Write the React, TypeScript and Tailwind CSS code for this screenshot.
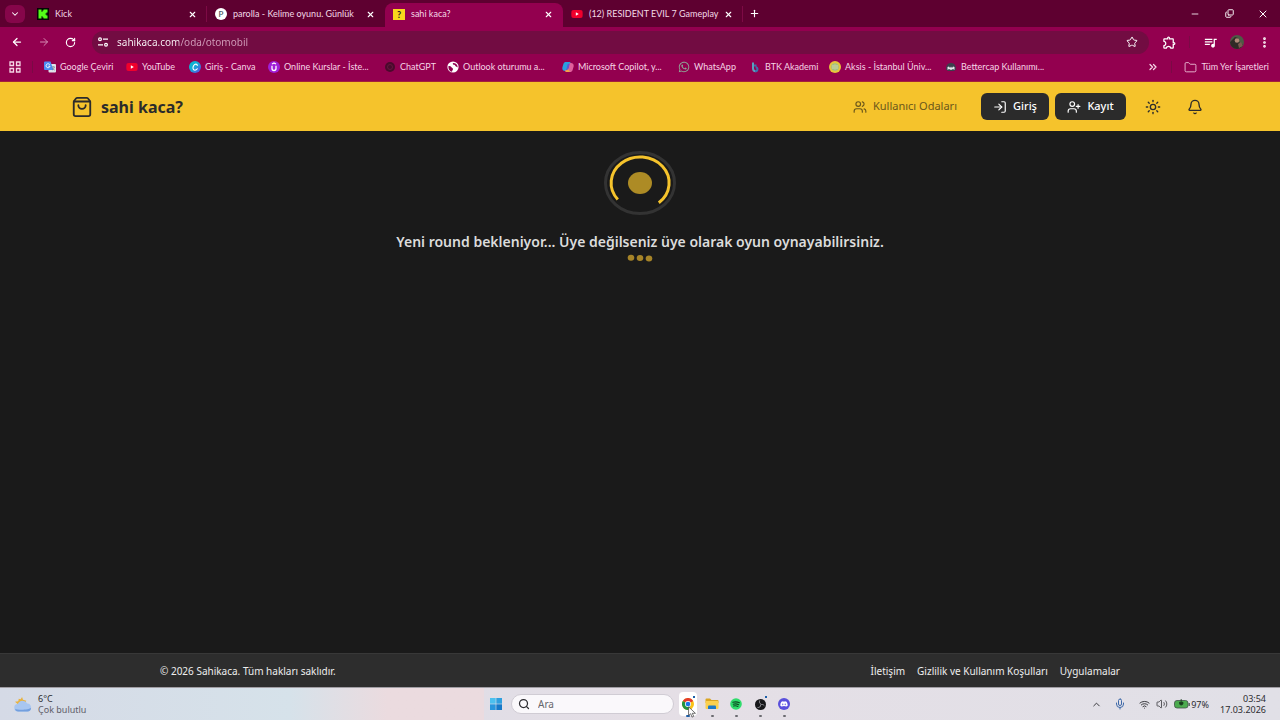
import * as React from "react";
import {
  ArrowLeft,
  ArrowRight,
  Bell,
  ChevronDown,
  ChevronUp,
  ChevronsRight,
  Copy,
  EllipsisVertical,
  Folder,
  LogIn,
  Mic,
  Minus,
  Plus,
  RotateCw,
  Search,
  ShoppingBag,
  Star,
  Sun,
  UserPlus,
  Users,
  Volume2,
  Wifi,
  X,
} from "lucide-react";
import { FaDiscord, FaWhatsapp, FaYoutube } from "react-icons/fa";
import { MdOutlineExtension, MdOutlineQueueMusic } from "react-icons/md";

/* ---------- small brand icons ---------- */

function KickIcon() {
  return (
    <svg viewBox="0 0 12 12" className="h-3 w-3 shrink-0">
      <rect width="12" height="12" fill="#050505" />
      <path d="M1.500 1.500h3v2.200h1V2.600h1V1.500h4v3H9.400v1H8.400v1h1v1h1.100v3h-4V9.400h-1V8.300h-1v2.200h-3z" fill="#53fc18" />
    </svg>
  );
}

function ParollaIcon() {
  return (
    <span className="flex h-3 w-3 shrink-0 items-center justify-center rounded-full bg-white text-[8px] leading-none font-semibold text-[#4b5563]">
      P
    </span>
  );
}

function QuestionIcon() {
  return (
    <span className="flex h-[11px] w-3 shrink-0 items-center justify-center bg-[#f9d71c] text-[9px] leading-none font-bold text-[#222222]">
      ?
    </span>
  );
}

function YoutubeIcon() {
  return (
    <span className="relative flex h-3 w-3 shrink-0 items-center justify-center">
      <span className="absolute h-1 w-1 bg-white" />
      <FaYoutube className="relative h-3 w-3 text-[#f0002c]" />
    </span>
  );
}

function TranslateIcon() {
  return (
    <svg viewBox="0 0 12 12" className="h-3 w-3 shrink-0">
      <rect x="4.500" y="3" width="7.500" height="8.500" rx="1" fill="#dfe3ea" />
      <path d="M1 .5h5.500L9.500 9H1a1 1 0 0 1-1-1V1.500a1 1 0 0 1 1-1z" fill="#4c8bf5" />
      <path d="M5.800 3.800A2 2 0 1 0 6 5.200H4.300" fill="none" stroke="#fff" strokeWidth=".9" />
      <path d="M7.500 6h3.500M9.200 5v1M10.300 6c-.3 1.500-1 2.300-2 3M8.600 7.200c.5.900 1.200 1.600 2.200 2" fill="none" stroke="#68758a" strokeWidth=".6" />
    </svg>
  );
}

function CanvaIcon() {
  return (
    <svg viewBox="0 0 12 12" className="h-3 w-3 shrink-0">
      <defs>
        <linearGradient id="canva" x1="0" y1="0" x2="1" y2="1">
          <stop offset="0" stopColor="#00c4cc" />
          <stop offset=".5" stopColor="#19a5d8" />
          <stop offset="1" stopColor="#6a3be4" />
        </linearGradient>
      </defs>
      <circle cx="6" cy="6" r="6" fill="url(#canva)" />
      <path d="M8.300 4.400C8.200 2.700 5.900 2.600 4.700 4.500 3.300 6.700 4 9.200 5.900 9.200c1 0 1.800-.5 2.400-1.400" fill="none" stroke="#fff" strokeWidth="1.100" strokeLinecap="round" />
    </svg>
  );
}

function CoursesIcon() {
  return (
    <svg viewBox="0 0 12 12" className="h-3 w-3 shrink-0">
      <circle cx="6" cy="6" r="6" fill="#a01fd8" />
      <path d="M4 4.700v2.800a2 2 0 0 0 4 0V4.700M4 3l2-1 2 1" fill="none" stroke="#fff" strokeWidth="1.300" />
    </svg>
  );
}

function ChatIcon() {
  return (
    <svg viewBox="0 0 12 12" className="h-3 w-3 shrink-0">
      <circle cx="6" cy="6" r="5" fill="#4a0a2c" />
      <circle cx="6" cy="6" r="2.500" fill="none" stroke="#6d1a45" strokeWidth=".8" />
    </svg>
  );
}

function GlobeIcon() {
  return (
    <svg viewBox="0 0 12 12" className="h-3 w-3 shrink-0">
      <circle cx="6" cy="6" r="5.600" fill="#fff" />
      <path d="M1.500 5c1.500 0 2.500.3 3 1.200.4.900 1.500.8 1.500 1.800S5 9.500 5 10.800C2.800 10.500 1 8 1.500 5zM6 2c-.6 1 .2 1.800 1.300 1.800.9 0 .7 1.500 1.700 1.700.9.200 1 .8 1.700.8C10.800 4 9 2 6 2z" fill="#8f0050" />
    </svg>
  );
}

function CopilotIcon() {
  return (
    <svg viewBox="0 0 12 12" className="h-3 w-3 shrink-0">
      <path d="M4 1h3.300c1 0 1.400.6 1.700 1.500L6.500 3 5 8.500C4.700 9.600 4 10 3 10 1 10-.2 8.500.5 6l.9-3C1.900 1.500 2.700 1 4 1z" fill="#2a9fe0" />
      <path d="M8 11H4.700c-1 0-1.400-.6-1.700-1.500L5.500 9 7 3.500C7.300 2.400 8 2 9 2c2 0 3.200 1.500 2.500 4l-.9 3C10.100 10.500 9.300 11 8 11z" fill="#e0609c" />
      <path d="M5.700 3h2l-1.500 6h-2z" fill="#5b59d6" />
      <path d="M3 9.500 5.500 9 6 7.500 8 11H4.700c-1 0-1.400-.6-1.700-1.500z" fill="#f2a444" />
    </svg>
  );
}

function BtkIcon() {
  return (
    <svg viewBox="0 0 12 12" className="h-3 w-3 shrink-0" fill="none" strokeWidth="2">
      <path d="M4 1.500v5.800c0 2 1 3 2.600 3" stroke="#5aa0bd" />
      <path d="M5 4.500h2.500M6 10.300c3 0 3.300-4 .6-4" stroke="#3f6fae" />
    </svg>
  );
}

function AksisIcon() {
  return (
    <svg viewBox="0 0 12 12" className="h-3 w-3 shrink-0">
      <circle cx="6" cy="6" r="6" fill="#e6c63c" />
      <circle cx="6" cy="6" r="3.800" fill="#9fbf86" />
      <path d="M4 4v4M6 3.500v5M8 4v4" stroke="#e9e2a8" strokeWidth=".8" />
    </svg>
  );
}

function BettercapIcon() {
  return (
    <svg viewBox="0 0 12 12" className="h-3 w-3 shrink-0">
      <path d="M1 8.500C1 4 3 2 6 2s5 2 5 6.500L9 10H3z" fill="#3b3f4c" />
      <path d="M2.500 9V6l1.500-.5L5 7l1-1.500L7 7l1-1.500 1.500.5v3L8 8 6 9 4 8z" fill="#e6e6ea" />
    </svg>
  );
}

function ChromeIcon() {
  return (
    <svg viewBox="0 0 24 24" className="h-3 w-3">
      <circle cx="12" cy="12" r="12" fill="#fbc116" />
      <path d="M12 12 1.600 6A12 12 0 0 1 22.400 6z" fill="#e33b2e" />
      <path d="M1.600 6A12 12 0 0 0 12 24l5.200-9L12 12z" fill="#229342" />
      <circle cx="12" cy="12" r="6" fill="#fff" />
      <circle cx="12" cy="12" r="4.700" fill="#1a73e8" />
    </svg>
  );
}

function ExplorerIcon() {
  return (
    <svg viewBox="0 0 14 12" className="h-3 w-[14px]">
      <path d="M.5 1.500a1 1 0 0 1 1-1H5L6.500 2H12.500a1 1 0 0 1 1 1v2H.5z" fill="#dba520" />
      <rect x=".5" y="3" width="13" height="8" rx="1" fill="#fbd04f" />
      <path d="M3 11V8.500a1 1 0 0 1 1-1h6a1 1 0 0 1 1 1V11z" fill="#1d79c9" />
    </svg>
  );
}

function SpotifyIcon() {
  return (
    <svg viewBox="0 0 12 12" className="h-3 w-3">
      <circle cx="6" cy="6" r="5.800" fill="#2fdc6c" />
      <path d="M2.800 4.300c2.300-.7 4.600-.5 6.600.5M3.200 6.200c2-.5 3.900-.3 5.500.5M3.600 8c1.600-.4 3-.2 4.300.4" fill="none" stroke="#0d4a22" strokeWidth="1.100" strokeLinecap="round" />
    </svg>
  );
}

function ObsIcon() {
  return (
    <svg viewBox="0 0 12 12" className="h-[11px] w-[11px]">
      <circle cx="6" cy="6" r="6" fill="#17171a" />
      <path d="M5 2c-.6 1.600.1 2.900 1.300 3.600M9.900 7c-1-1.300-2.500-1.400-3.600-.7M3.200 9.300c1.700.2 2.800-.8 2.900-2.200" fill="none" stroke="#a5a5ab" strokeWidth=".9" strokeLinecap="round" />
    </svg>
  );
}

function WindowsIcon() {
  return (
    <svg viewBox="0 0 12 12" className="h-3 w-3">
      <path d="M0 0h5.700v5.700H0z" fill="#4cc0ee" />
      <path d="M6.300 0H12v5.700H6.300z" fill="#2f9fde" />
      <path d="M0 6.300h5.700V12H0z" fill="#2896dc" />
      <path d="M6.300 6.300H12V12H6.300z" fill="#1679c8" />
    </svg>
  );
}

function WeatherIcon() {
  return (
    <svg viewBox="0 0 20 18" className="h-[17px] w-5 shrink-0">
      <path d="M9 1l1 3 3.500 1-1.500 3-7 1-3.500-3L5 5.500 5.500 3l2 .5z" fill="#e9b23e" />
      <path d="M5 16.500a4 4 0 0 1-.5-8A5.500 5.500 0 0 1 14.500 8a4.300 4.300 0 0 1 .5 8.500z" fill="#a8c6f0" />
      <path d="M1.600 13.500C4 15 16 15 18.600 12.500c0 2.500-1.600 4-3.600 4H5c-2 0-3.200-1.500-3.400-3z" fill="#739fde" />
    </svg>
  );
}

function AppsIcon() {
  return (
    <svg viewBox="0 0 12 12" className="h-3 w-3" fill="none" stroke="currentColor" strokeWidth="1.300">
      <path d="M1 1h3.500v3.500H1zM7.500 1H11v3.500H7.500zM1 7.500h3.500V11H1zM7.500 7.500H11V11H7.500z" />
    </svg>
  );
}

function TuneIcon() {
  return (
    <svg viewBox="0 0 12 12" className="h-3 w-3 shrink-0" fill="none" stroke="currentColor" strokeWidth="1.200">
      <circle cx="3" cy="3.200" r="1.400" />
      <path d="M6 3.200h5M1 8.800h5" />
      <circle cx="9" cy="8.800" r="1.400" />
    </svg>
  );
}

function BatteryIcon() {
  return (
    <svg viewBox="0 0 16 10" className="h-[10px] w-4">
      <rect x=".5" y="1.500" width="13.500" height="7.500" rx="2.500" fill="#4cab4f" stroke="#41524a" strokeWidth=".8" />
      <path d="M15.200 4v3" stroke="#41524a" strokeWidth="1.200" />
      <path d="M7.200 0v3M5.500 3.300h3.500v1a1.700 1.700 0 0 1-3.500 0z" fill="#173b1c" stroke="#173b1c" strokeWidth=".8" />
    </svg>
  );
}

/* ---------- browser ---------- */

interface TabProps {
  icon: React.ReactNode;
  title: string;
  active?: boolean;
  divider?: boolean;
}

function BrowserTab({ icon, title, active = false, divider = false }: TabProps) {
  return (
    <div className={`flex w-[178px] items-center pb-[2px] ${active ? "rounded-t-lg bg-[#93004f]" : ""}`}>
      <div
        className={`flex h-4 flex-1 items-center gap-[6px] border-r pr-[9px] pl-2 ${
          divider ? "border-[#7d0a45]" : "border-transparent"
        }`}
      >
        {icon}
        <span className="min-w-0 flex-1 text-[9px] whitespace-nowrap text-[#f3d9e6]">{title}</span>
        <button type="button" aria-label={`${title} sekmesini kapat`} className="flex shrink-0 items-center justify-center">
          <X className="h-[9px] w-[9px]" strokeWidth={3} />
        </button>
      </div>
    </div>
  );
}

const bookmarks = [
  { label: "Google Çeviri", icon: <TranslateIcon />, width: "w-[82px]" },
  { label: "YouTube", icon: <YoutubeIcon />, width: "w-[63px]" },
  { label: "Giriş - Canva", icon: <CanvaIcon />, width: "w-[79px]" },
  { label: "Online Kurslar - İste...", icon: <CoursesIcon />, width: "w-[116px]" },
  { label: "ChatGPT", icon: <ChatIcon />, width: "w-[63px]" },
  { label: "Outlook oturumu a...", icon: <GlobeIcon />, width: "w-[115px]" },
  { label: "Microsoft Copilot, y...", icon: <CopilotIcon />, width: "w-[116px]" },
  { label: "WhatsApp", icon: <FaWhatsapp className="h-3 w-3 shrink-0 text-[#8fa596]" />, width: "w-[71px]" },
  { label: "BTK Akademi", icon: <BtkIcon />, width: "w-[80px]" },
  { label: "Aksis - İstanbul Üniv...", icon: <AksisIcon />, width: "w-[116px]" },
  { label: "Bettercap Kullanımı...", icon: <BettercapIcon />, width: "w-[116px]" },
];

function BrowserChrome() {
  return (
    <div className="border-b border-[#a3203c] bg-[#93004f] font-[Lato,sans-serif] text-white">
      {/* Tabs */}
      <div className="flex h-[27px] items-stretch bg-[#5e0030]">
        <button
          type="button"
          aria-label="Sekmelerde ara"
          className="mr-1 ml-[5px] flex h-[18px] w-5 items-center justify-center self-center rounded-md bg-[#86064a]"
        >
          <ChevronDown className="h-[10px] w-[10px]" strokeWidth={2.500} />
        </button>
        <div className="flex items-stretch pt-[3px]">
          <BrowserTab icon={<KickIcon />} title="Kick" divider />
          <BrowserTab icon={<ParollaIcon />} title="parolla - Kelime oyunu. Günlük" />
          <BrowserTab icon={<QuestionIcon />} title="sahi kaca?" active />
          <BrowserTab icon={<YoutubeIcon />} title="(12) RESIDENT EVIL 7 Gameplay" divider />
        </div>
        <button type="button" aria-label="Yeni sekme" className="ml-[3px] flex w-5 items-center justify-center">
          <Plus className="h-[11px] w-[11px]" strokeWidth={2.500} />
        </button>
        <div className="ml-auto flex">
          <button type="button" aria-label="Simge durumuna küçült" className="flex w-[34px] items-center justify-center">
            <Minus className="h-[10px] w-[10px]" />
          </button>
          <button type="button" aria-label="Önceki boyut" className="flex w-[34px] items-center justify-center">
            <Copy className="h-[9px] w-[9px] -scale-y-100" strokeWidth={2.500} />
          </button>
          <button type="button" aria-label="Kapat" className="flex w-[34px] items-center justify-center">
            <X className="h-3 w-3" />
          </button>
        </div>
      </div>

      {/* Address bar */}
      <div className="flex h-[30px] items-center">
        <div className="flex items-center pl-[3px]">
          <button type="button" aria-label="Geri" className="flex w-[27px] justify-center">
            <ArrowLeft className="h-3 w-3" strokeWidth={2.500} />
          </button>
          <button type="button" aria-label="İleri" className="flex w-[27px] justify-center text-[#d58bb3]">
            <ArrowRight className="h-3 w-3" />
          </button>
          <button type="button" aria-label="Yenile" className="flex w-[27px] justify-center">
            <RotateCw className="h-[11px] w-[11px]" strokeWidth={2.500} />
          </button>
        </div>
        <div className="ml-2 flex h-[23px] min-w-0 flex-1 items-center gap-2 rounded-full bg-[#720c42] pr-[11px] pl-[5px]">
          <TuneIcon />
          <input
            type="text"
            aria-label="Adres çubuğu"
            defaultValue="sahikaca.com/oda/otomobil"
            className="min-w-0 flex-1 bg-linear-to-r from-white from-[62px] to-[#d3a0bc] to-[62px] bg-clip-text font-['Noto_Sans',sans-serif] text-[10px] text-transparent outline-none"
          />
          <button type="button" aria-label="Yer işareti ekle">
            <Star className="h-3 w-3" />
          </button>
        </div>
        <div className="flex items-center">
          <button type="button" aria-label="Uzantılar" className="flex w-10 justify-center">
            <MdOutlineExtension className="h-[15px] w-[15px]" />
          </button>
          <span className="h-3 w-px bg-[#7a0a45]" />
          <button type="button" aria-label="Medya" className="flex w-10 justify-center">
            <MdOutlineQueueMusic className="h-[15px] w-[15px]" />
          </button>
          <button
            type="button"
            aria-label="Profil"
            className="mr-3 flex h-[14px] w-[14px] items-center justify-center overflow-hidden rounded-full bg-[#4d5a45]"
          >
            <svg viewBox="0 0 14 14" className="h-full w-full">
              <path d="M0 14V7l5-5 3 1 1 4 4 3v4z" fill="#2f2a26" />
              <circle cx="7" cy="5.500" r="2.300" fill="#b08a78" />
              <path d="M8 9l3-2 2 4-4 2z" fill="#7c5a52" />
            </svg>
          </button>
          <button type="button" aria-label="Menü" className="mr-2 flex w-4 justify-center">
            <EllipsisVertical className="h-[13px] w-[13px]" strokeWidth={3} />
          </button>
        </div>
      </div>

      {/* Bookmarks */}
      <div className="flex h-6 items-center pb-1 text-[9px] text-[#f5d5e5]">
        <button type="button" aria-label="Uygulamalar" className="ml-[9px]">
          <AppsIcon />
        </button>
        <span className="mx-[11px] h-3 w-px bg-[#7a0a45]" />
        <nav className="flex min-w-0 flex-1 overflow-hidden">
          {bookmarks.map((b) => (
            <a key={b.label} href="#" className={`flex shrink-0 items-center gap-1 whitespace-nowrap ${b.width}`}>
              {b.icon}
              {b.label}
            </a>
          ))}
        </nav>
        <button type="button" aria-label="Diğer yer işaretleri" className="mr-3">
          <ChevronsRight className="h-3 w-3" strokeWidth={2.500} />
        </button>
        <span className="mr-3 h-3 w-px bg-[#7a0a45]" />
        <a href="#" className="mr-[11px] flex items-center gap-1 whitespace-nowrap">
          <Folder className="h-[13px] w-[13px]" strokeWidth={1.500} />
          Tüm Yer İşaretleri
        </a>
      </div>
    </div>
  );
}

/* ---------- site ---------- */

function SiteHeader() {
  return (
    <header className="flex h-[49px] items-center justify-between bg-[#f5c32c] pr-[67px] pl-[71px] text-[#2b2b2b]">
      <a href="#" className="flex items-center gap-2">
        <ShoppingBag className="h-[22px] w-[22px]" strokeWidth={2} />
        <span className="text-base font-bold">sahi kaca?</span>
      </a>
      <div className="flex items-center gap-[6px] text-[11px]">
        <a href="#" className="mr-[18px] flex items-center gap-[6px] text-[#6b571b]">
          <Users className="h-[14px] w-[14px]" />
          Kullanıcı Odaları
        </a>
        <button type="button" className="flex h-[27px] w-[68px] items-center justify-center gap-[6px] rounded-md bg-[#2b2b2b] font-medium text-white">
          <LogIn className="h-[14px] w-[14px]" />
          Giriş
        </button>
        <button type="button" className="flex h-[27px] w-[71px] items-center justify-center gap-[6px] rounded-md bg-[#2b2b2b] font-medium text-white">
          <UserPlus className="h-[14px] w-[14px]" />
          Kayıt
        </button>
        <div className="ml-[3px] flex gap-[6px]">
          <button type="button" aria-label="Tema" className="flex w-9 justify-center">
            <Sun className="h-4 w-4" />
          </button>
          <button type="button" aria-label="Bildirimler" className="flex w-9 justify-center">
            <Bell className="h-4 w-4" />
          </button>
        </div>
      </div>
    </header>
  );
}

function WaitingRoom() {
  return (
    <main className="flex flex-1 flex-col items-center pt-5">
      <svg viewBox="0 0 72 64" className="h-16 w-[72px]" fill="none">
        <ellipse cx="36" cy="32" rx="34.500" ry="30.500" stroke="#333333" strokeWidth="3" />
        <path d="M13.800 48.500A29 26 0 1 1 54.800 51.800" stroke="#f5c32c" strokeWidth="3" />
        <ellipse cx="36" cy="32" rx="12" ry="11" fill="#ad8b25" />
      </svg>
      <p className="mt-4 text-center text-sm leading-[22px] font-semibold text-[#dcdcdc]">
        Yeni round bekleniyor... Üye değilseniz üye olarak oyun oynayabilirsiniz.
      </p>
      <svg viewBox="0 0 26 8" className="mt-[1px] h-2 w-[26px]" fill="#a68428">
        <ellipse cx="4" cy="3.700" rx="3.300" ry="3" />
        <ellipse cx="13" cy="4" rx="3.300" ry="3" />
        <ellipse cx="22" cy="4.600" rx="3.300" ry="3" />
      </svg>
    </main>
  );
}

function SiteFooter() {
  return (
    <footer className="flex h-[34px] items-center justify-between border-t border-[#383838] bg-[#2d2d2d] px-40 pt-[2px] text-[10px] text-[#eeeeee]">
      <p>© 2026 Sahikaca. Tüm hakları saklıdır.</p>
      <nav className="flex gap-3">
        <a href="#">İletişim</a>
        <a href="#">Gizlilik ve Kullanım Koşulları</a>
        <a href="#">Uygulamalar</a>
      </nav>
    </footer>
  );
}

/* ---------- taskbar ---------- */

interface TaskbarAppProps {
  label: string;
  children: React.ReactNode;
  active?: boolean;
  badge?: boolean;
}

function TaskbarApp({ label, children, active = false, badge = false }: TaskbarAppProps) {
  return (
    <button type="button" aria-label={label} className="relative flex h-7 w-6 items-center justify-center">
      {active && <span className="absolute inset-x-[3px] inset-y-[2px] rounded-sm bg-white" />}
      <span className="relative">{children}</span>
      {badge && <span className="absolute top-[6px] right-[5px] h-[2px] w-[2px] bg-[#1c5fa8]" />}
      <span
        className={`absolute bottom-[1px] h-[2px] rounded-full ${active ? "w-1 bg-[#1c5fa8]" : "w-[3px] bg-[#6b6b70]"}`}
      />
    </button>
  );
}

function Taskbar() {
  return (
    <div className="grid h-[33px] grid-cols-[1fr_auto_1fr] items-center border-t border-[#a09da3] bg-linear-to-r from-[#d5dae6] via-[#e5dfe6] to-[#e1e0e7] text-[#2c2c30]">
      <div className="flex h-full items-center gap-[5px] bg-linear-to-r from-[#d5dae6] via-[#d6e2ea] via-60% to-[#ebdbdf] to-80% pl-[13px] text-[9px] leading-[11px]">
        <WeatherIcon />
        <div>
          <p>6°C</p>
          <p className="text-[#606068]">Çok bulutlu</p>
        </div>
      </div>

      <div className="relative flex items-center">
        <button type="button" aria-label="Başlat" className="mr-[3px] flex w-6 justify-center">
          <WindowsIcon />
        </button>
        <label className="mr-[2px] flex h-5 w-[163px] items-center gap-2 rounded-full border border-[#d0ccd4] bg-[#faf8fb] px-[6px]">
          <Search className="h-3 w-3 shrink-0" strokeWidth={2.500} />
          <input
            type="text"
            aria-label="Ara"
            placeholder="Ara"
            className="min-w-0 flex-1 bg-transparent text-[10px] outline-none placeholder:text-[#66666c]"
          />
        </label>
        <TaskbarApp label="Chrome" active badge>
          <ChromeIcon />
        </TaskbarApp>
        <TaskbarApp label="Dosya Gezgini">
          <ExplorerIcon />
        </TaskbarApp>
        <TaskbarApp label="Spotify">
          <SpotifyIcon />
        </TaskbarApp>
        <TaskbarApp label="OBS Studio" badge>
          <ObsIcon />
        </TaskbarApp>
        <TaskbarApp label="Discord">
          <span className="flex h-3 w-3 items-center justify-center rounded-full bg-[#5a50dc]">
            <FaDiscord className="h-2 w-2 text-white" />
          </span>
        </TaskbarApp>

        {/* Mouse pointer */}
        <svg viewBox="0 0 10 14" className="absolute top-4 left-[203px] h-3 w-[10px]">
          <path d="M1 1v10l2.500-2L5 13l2-1-1.700-3.500H9z" fill="#fff" stroke="#333" strokeWidth=".8" />
        </svg>
      </div>

      <div className="flex items-center justify-end pr-[14px] text-[9px] leading-[11px]">
        <ChevronUp className="mr-3 h-[11px] w-[11px]" />
        <Mic className="mr-[13px] h-3 w-3 text-[#3d68a8]" />
        <Wifi className="mr-[6px] h-[11px] w-[11px]" />
        <Volume2 className="mr-[6px] h-3 w-3" strokeWidth={1.500} />
        <BatteryIcon />
        <span className="mr-[11px] ml-[1px]">97%</span>
        <div className="text-right">
          <p>03:54</p>
          <p>17.03.2026</p>
        </div>
      </div>
    </div>
  );
}

export default function App() {
  return (
    <div className="flex min-h-screen flex-col bg-[#1a1a1a] font-['Noto_Sans','Open_Sans',sans-serif]">
      <BrowserChrome />
      <SiteHeader />
      <WaitingRoom />
      <SiteFooter />
      <Taskbar />
    </div>
  );
}
